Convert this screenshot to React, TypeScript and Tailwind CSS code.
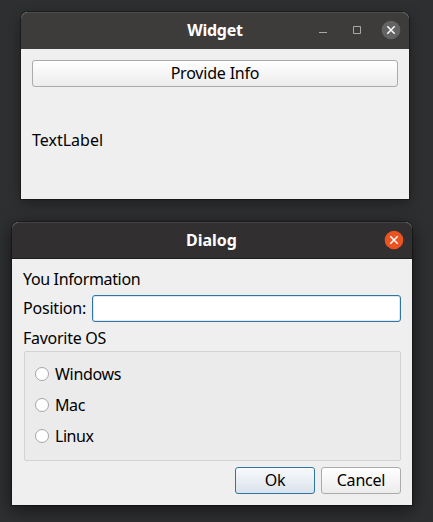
import React from "react";

function CloseIcon({ className }: { className: string }) {
  return (
    <svg width="20" height="20" viewBox="0 0 20 20" className={className}>
      <circle cx="10" cy="10" r="9.3" fill="currentColor" />
      <path d="M6.3 6.3l7.4 7.4M13.7 6.3l-7.4 7.4" stroke="#fff" strokeWidth="1.5" fill="none" />
    </svg>
  );
}

function Radio({ label, spacing }: { label: string; spacing: string }) {
  return (
    <label className="flex h-[31px] items-center gap-[6px]">
      <span className="h-[14px] w-[14px] rounded-full border border-[#a6a6a6] bg-white" />
      <span className={`whitespace-nowrap ${spacing}`}>{label}</span>
    </label>
  );
}

export default function App() {
  return (
    <div className="flex h-[522px] w-[433px] flex-col overflow-hidden bg-[#2e2f31] pt-3 font-['Noto_Sans','Open_Sans',sans-serif] text-[16px] leading-[20px] text-black">
      <section className="ml-[21px] flex h-[187px] w-[388px] flex-col rounded-t-[7px] bg-[#efefef] shadow-[0_0_0_1px_rgba(0,0,0,0.3),0_3px_12px_rgba(0,0,0,0.4)]">
        <header className="flex h-[37px] shrink-0 items-center rounded-t-[7px] border-t border-[#4c4b48] bg-[#3e3c3a] pr-[8px] pb-[2px]">
          <h1 className="flex-1 pl-[90px] text-center text-[16px] font-bold tracking-[-0.25px] text-white">Widget</h1>
          <svg width="44" height="10" viewBox="0 0 44 10" fill="none" stroke="#a9a8a6" className="mr-[18px]">
            <path d="M0 7.5h8M34.5 1.5h7v7h-7z" />
          </svg>
          <CloseIcon className="text-[#636363]" />
        </header>
        <div className="flex flex-1 flex-col px-[11px] pt-[11px]">
          <button className="h-[27px] rounded-[3px] border border-[#ababab] bg-linear-to-b from-white to-[#ececec] pb-[2px] tracking-[-0.2px]">
            Provide Info
          </button>
          <p className="mt-[43px]"><span>TextLabel</span></p>
        </div>
      </section>

      <section className="mt-[23px] ml-3 flex h-[283px] w-[400px] flex-col rounded-t-[7px] bg-[#efefef] shadow-[0_0_0_1px_rgba(0,0,0,0.35),0_4px_18px_rgba(0,0,0,0.6)]">
        <header className="flex h-[37px] shrink-0 items-center rounded-t-[7px] border-t border-b border-t-[#444242] border-b-[#1d1b1b] bg-[#322f30] pr-[8px] pb-px">
          <h2 className="flex-1 pl-[27px] text-center text-[16px] font-bold text-white">Dialog</h2>
          <CloseIcon className="text-[#e95420]" />
        </header>
        <div className="flex flex-1 flex-col px-[11px] pt-[10px]">
          <p className="tracking-[-0.35px]"><span>You Information</span></p>
          <div className="mt-[6px] flex h-[27px] items-center justify-between">
            <label className="whitespace-nowrap pb-px tracking-[-0.2px]">Position:</label>
            <input className="h-[27px] w-[309px] rounded-[3px] border border-[#2f75a3] bg-white shadow-[inset_0_0_0_1px_#e0e8ed] outline-none" />
          </div>
          <p className="mt-[6px] tracking-[-0.27px]"><span>Favorite OS</span></p>
          <div className="mt-[3px] ml-px flex h-[110px] flex-col rounded-[2px] border border-[#d3d3d3] bg-[#ebebeb] pt-[6px] pl-[10px]">
            <Radio label="Windows" spacing="tracking-[-0.3px]" />
            <Radio label="Mac" spacing="tracking-[-0.4px]" />
            <Radio label="Linux" spacing="tracking-[-0.45px]" />
          </div>
          <div className="mt-[6px] flex justify-end gap-[6px]">
            <button className="h-[27px] w-[80px] rounded-[3px] border border-[#2f75a3] bg-linear-to-b from-[#f8fafc] to-[#dae2ea] pb-[2px] tracking-[-0.3px]">Ok</button>
            <button className="h-[27px] w-[80px] rounded-[3px] border border-[#ababab] bg-linear-to-b from-white to-[#ececec] pb-[2px] tracking-[-0.2px]">Cancel</button>
          </div>
        </div>
      </section>
    </div>
  );
}
